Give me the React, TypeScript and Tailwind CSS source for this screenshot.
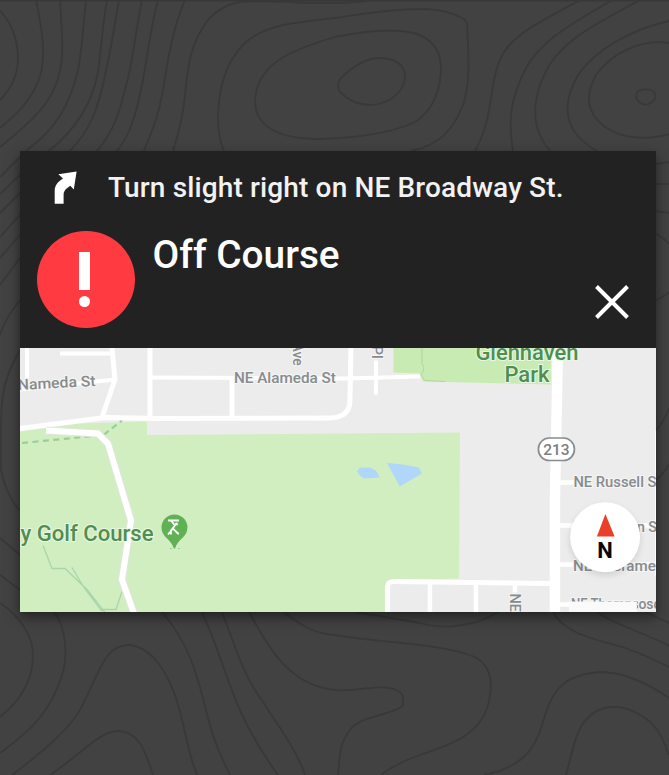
import React from "react";

const contours: string[] = [
  "M0 11C14 25 18 45 18 58C18 75 10 90 0 100",
  "M36 0C40 20 44 40 43 58C42 90 20 112 0 128",
  "M60 0C61 20 63 40 62 55C60 95 40 115 0 147",
  "M86 0C83 30 82 50 78 70C70 105 55 130 26 151L0 177",
  "M107 0C102 30 101 50 98 72C92 105 75 130 49 151L20 175L0 194",
  "M119 0C113 35 110 55 105 75C98 110 90 130 70 151L20 193L0 213",
  "M142 0C135 35 133 60 127 82C120 110 115 130 97 151L20 215L0 237",
  "M158 0C150 30 147 60 142 85C136 115 130 135 117 151L20 235L0 258",
  "M185 0C172 30 168 60 163 90C158 120 150 135 144 151L20 258L0 285",
  "M371 0C345 4 320 4 290 2C240 0 226 0 208 20C185 50 188 80 183 110C180 130 176 140 173 151",
  "M335 18C290 23 265 25 245 43C222 65 219 95 218 115C218 135 221 145 224 151",
  "M335 18C380 11 400 9 425 9C448 10 467 18 467 24C469 60 470 85 463 105C453 130 440 145 411 151",
  "M335 37C290 50 255 65 255 103C257 130 285 139 320 139C350 138 390 134 415 122C435 110 441 85 441 68C441 45 425 32 400 31C380 29 360 32 335 37",
  "M340 79C352 67 365 58 380 58C400 58 406 70 405 78C403 95 385 105 370 105C358 105 347 99 340 92C337 86 338 84 340 79",
  "M580 0C540 22 510 35 500 60C488 85 495 115 475 151",
  "M612 0C575 22 540 40 525 70C510 100 508 120 513 151",
  "M640 0C600 22 560 40 545 73C530 105 532 130 550 151",
  "M669 21C630 30 595 50 578 75C558 110 568 135 597 151",
  "M669 43C640 38 610 55 596 75C582 100 590 120 612 131C630 140 650 139 669 134",
  "M637 92C640 89 650 88 654 92C657 97 655 101 650 103C645 107 642 103 639 102C635 98 636 97 637 92",
  "M656 164L669 162",
  "M656 184L669 184",
  "M656 211L669 213",
  "M656 234Q664 238 669 244",
  "M656 300Q664 297 669 292",
  "M656 430Q664 422 669 408",
  "M656 480Q664 474 669 464",
  "M20 350C0 385 0 400 1 470Q6 495 20 511",
  "M20 300C8 315 3 325 0 335",
  "M0 538L20 555",
  "M0 575L20 590",
  "M0 603C25 620 33 640 33 655C33 685 15 705 0 717",
  "M54 612C68 630 67 660 62 675C50 715 25 735 0 753",
  "M12 775C45 750 75 725 85 700C100 670 105 647 127 645C150 645 165 670 173 690C185 720 185 745 197 775",
  "M50 775C80 755 100 731 118 731C138 731 145 750 153 775",
  "M162 612C195 650 200 690 210 725C215 745 225 765 230 775",
  "M202 612C215 640 222 665 230 685C242 720 260 750 278 775",
  "M222 612C235 645 240 665 252 685C270 715 295 745 305 775",
  "M249 612C265 640 285 685 335 690C355 692 375 685 390 688C405 692 403 697 403 705C395 715 360 715 350 730C338 745 340 760 338 775",
  "M284 612C300 625 315 634 335 635C380 643 440 643 475 657C495 668 492 690 488 705C480 735 450 745 420 755C400 762 390 768 381 775",
  "M355 612L420 623Q437 628 455 626Q480 624 498 612",
  "M484 775C520 768 535 750 542 725C550 700 555 675 600 672C625 672 650 685 669 698",
  "M566 775C572 755 573 740 582 725C595 705 620 700 645 718C660 728 665 745 669 755",
  "M553 612C565 635 600 640 625 648C645 655 655 660 669 667",
  "M597 612C615 625 650 635 669 646",
  "M645 612L669 623",
];

function Topography() {
  return (
    <svg
      className="absolute inset-0 h-full w-full"
      viewBox="0 0 669 775"
      fill="none"
      stroke="#393939"
      strokeWidth="1.8"
      aria-hidden="true"
    >
      {contours.map((d) => (
        <path key={d} d={d} />
      ))}
      <path d="M0 0H669" stroke="#383838" strokeWidth="3" />
    </svg>
  );
}

function TurnIcon() {
  return (
    <svg className="mt-px h-9 w-7 shrink-0" viewBox="52 169 28 36" fill="#fff" aria-hidden="true">
      <path d="M58.3 173.2L76.6 170.6L73.8 188.6L70.3 184.8C65.5 188 63.6 190 63.6 194V202.7H54.7V190C54.7 184 58 181 63 177.6Z" />
    </svg>
  );
}

function Street({ x, y, size, length, children, angle = 0 }: {
  x: number; y: number; size: number; length?: number; children: string; angle?: number;
}) {
  return (
    <text
      x={x}
      y={y}
      fontSize={size}
      textLength={length}
      lengthAdjust="spacingAndGlyphs"
      transform={`rotate(${angle} ${x} ${y})`}
      fill="#878b8d"
      stroke="#f5f5f5"
      strokeWidth="2"
      paintOrder="stroke"
    >
      {children}
    </text>
  );
}

function RouteMap() {
  return (
    <svg className="block h-[264.5px] w-full font-[Roboto,sans-serif] font-medium" viewBox="20 347.5 636.5 264.5">
      <rect x="20" y="347" width="637" height="266" fill="#ececec" />
      <path d="M20 431L80 423L147 421V434.5L460 432L459 578L387 580V613H20Z" fill="#d1eec0" />
      <path d="M393.5 347H551V384L423 381L420 373L393.5 372Z" fill="#c8ebb3" />
      <path d="M422 347V363L424 367Q424 372 421 374L425 380L445 381" fill="none" stroke="#b0d5a0" strokeWidth="1" />
      <path d="M357 471L360 467L370 467L376 470L380 477L364 478L360 475Z M387 462.5L403 464L419 467L422 473L400 486Z" fill="#b0d7fa" />
      <g fill="none" stroke="#a9d5ab" strokeWidth="1.3">
        <path d="M43 545L52 568L65 568L87 589L105 612M72 567L84 587L102 611M101 609H116L122 591" />
      </g>
      <g fill="none" stroke="#99cf99" strokeWidth="2.2">
        <path d="M22 442.5L98 435" strokeDasharray="6 4.5" />
        <path d="M104 434L122 420" strokeDasharray="6 4" />
      </g>
      <g fill="none" stroke="#fff" strokeLinejoin="round">
        <path d="M20 428L105 417L160 418L330 417.5Q350 417 350 400L351 347" strokeWidth="5" />
        <path d="M27 347V381M60 353H113M20 389L115 379M150 377L345 378L420 376M376 360V394" strokeWidth="4" />
        <path d="M112 347L115 379L102 417M150 347V418M232 379V417" strokeWidth="5" />
        <path d="M46 430L98 433L108 443L131 520L122 579L134 613" stroke="#e2e5dd" strokeWidth="8" />
        <path d="M46 430L98 433L108 443L131 520L122 579L134 613" strokeWidth="6" />
        <path d="M558 347L555 500V613" strokeWidth="10.5" />
        <path d="M387.5 613V587Q387 581 395 581L552 583" strokeWidth="5" />
        <path d="M430 583V613M476 583V613M515 583V592M556 482H576M556 525H656M556 564H656M556 604H656" strokeWidth="4.5" />
        <path d="M656 430V575" strokeWidth="1.5" />
      </g>

      <Street x={18} y={389.5} size={15} length={78} angle={-3}>Nameda St</Street>
      <Street x={234} y={382.5} size={14.3} length={102}>NE Alameda St</Street>
      <Street x={293.5} y={342} size={14} angle={90}>Ave</Street>
      <Street x={372} y={345} size={15} angle={90}>Pl</Street>
      <Street x={573.5} y={486.5} size={14.2} length={88}>NE Russell St</Street>
      <Street x={637} y={531.5} size={14.2}>n St</Street>
      <Street x={573} y={570.5} size={14.2} length={83}>NE Sacrame</Street>
      <Street x={571} y={609} size={14} length={98}>NE Thompson St</Street>
      <path d="M569 601H637V613H569Z" fill="#fafafa" />
      <Street x={638.5} y={609} size={14}>osco</Street>
      <Street x={510} y={593} size={14.5} angle={90}>NE</Street>

      <rect x="538.5" y="437.5" width="36" height="22.5" rx="11" fill="#fff" stroke="#888b8d" strokeWidth="1.7" />
      <text x="556.5" y="454.2" textAnchor="middle" fontSize="15.5" fill="#7c8082">213</text>

      <g fill="#508d50" stroke="#eaf7e2" strokeWidth="2" paintOrder="stroke">
        <text x="475.5" y="359" fontSize="21.5" textLength="103" lengthAdjust="spacingAndGlyphs">Glenhaven</text>
        <text x="504.5" y="381" fontSize="21.5" textLength="45" lengthAdjust="spacingAndGlyphs">Park</text>
        <text x="20.5" y="540.3" fontSize="22" textLength="133" lengthAdjust="spacingAndGlyphs">y Golf Course</text>
      </g>

      <path d="M174.5 514A13 13 0 0 1 187.5 527C187.5 537 178 538 175 548H174C171 538 161.5 537 161.5 527A13 13 0 0 1 174.5 514Z" fill="#60b154" />
      <path d="M168 520H179M171 520L175 525L171 530V534M168 534L173 528L178 533H179" fill="none" stroke="#fff" strokeWidth="1.8" />
      <circle cx="176.5" cy="523.5" r="1.5" fill="#fff" />
      <path d="M170 548H172M178 548H180" stroke="#a0cba0" />

      <g className="drop-shadow-md">
        <circle cx="605.2" cy="536.7" r="35" fill="#fff" />
      </g>
      <path d="M605.5 513.5L614.7 536H597Z" fill="#ea4029" />
      <text x="605.2" y="557.5" textAnchor="middle" fontSize="22" className="font-bold" fill="#080808">N</text>
    </svg>
  );
}

export default function App() {
  return (
    <main className="relative h-[775px] w-[669px] overflow-hidden bg-[#424242] pl-5 pt-[151px]">
      <Topography />
      <section className="relative w-[636.4px] bg-[#222222] shadow-[0_5px_12px_rgba(0,0,0,0.5)]">
        <header className="h-[196.5px] font-[Roboto,sans-serif] font-medium text-white">
          <div className="flex h-[72px] items-center gap-[28px] pl-8">
            <TurnIcon />
            <p className="whitespace-nowrap pt-px text-[28px] leading-9 tracking-[0.14px] text-[#f2f2f2]">Turn slight right on NE Broadway St.</p>
          </div>
          <div className="flex pl-[17px]">
            <div className="mt-[7.5px] flex size-[97.5px] shrink-0 flex-col items-center justify-center gap-[6px] rounded-full bg-[#ff3b41] pr-0.5">
              <span className="h-[38px] w-[11px] bg-white" />
              <span className="size-[11px] rounded-full bg-white" />
            </div>
            <h1 className="ml-[18px] mt-[9px] whitespace-nowrap text-[38.8px] leading-[46px]">Off Course</h1>
            <button className="ml-auto mr-[27.5px] mt-[61.5px] size-[34px]" aria-label="Close">
              <svg viewBox="0 0 34 34" className="size-[34px]" fill="none" stroke="#fff" strokeWidth="4">
                <path d="M1.5 1.5L32.5 32.5M32.5 1.5L1.5 32.5" />
              </svg>
            </button>
          </div>
        </header>
        <RouteMap />
      </section>
    </main>
  );
}
